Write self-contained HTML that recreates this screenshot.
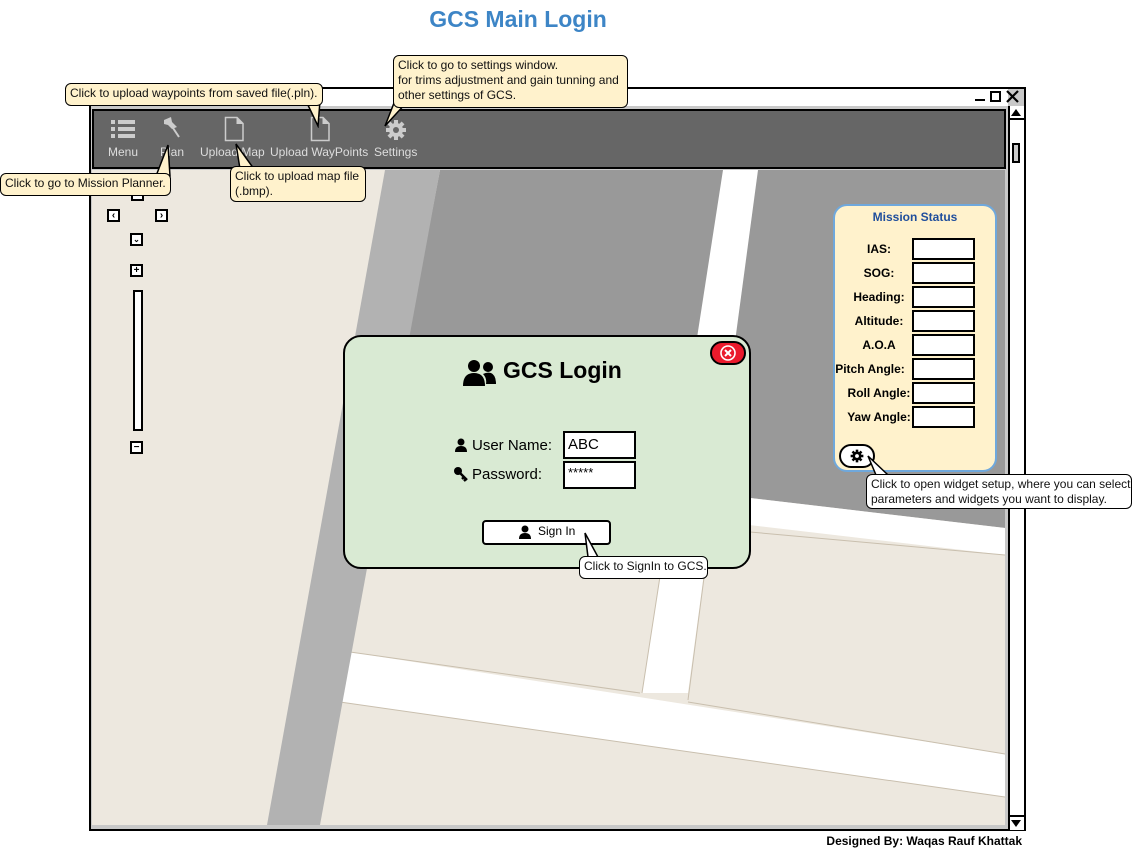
<!DOCTYPE html>
<html><head><meta charset="utf-8"><style>
*{box-sizing:border-box;margin:0;padding:0}
body{width:1133px;height:853px;background:#fff;position:relative;overflow:hidden;font-family:"Liberation Sans",sans-serif;}
.abs{position:absolute}
.tip{position:absolute;background:#fff2cc;border:1.5px solid #000;border-radius:6px;font-size:12px;line-height:15px;padding:2px 4px;color:#111;white-space:nowrap}
.tip.w{background:#fff}
.lbl{position:absolute;font-size:12px;font-weight:bold;text-align:center;width:90px;left:834px}
.box{position:absolute;width:63px;height:22px;border:2px solid #000;background:#fff}
.nav{position:absolute;width:13px;height:13px;border:2px solid #000;background:#fff;font-size:10px;line-height:9px;text-align:center;font-weight:bold}
.tb{position:absolute;top:145px;font-size:12px;color:#ddd}
</style></head><body>
<div class="abs" style="left:0;top:6px;width:1036px;text-align:center;font-size:23px;font-weight:bold;color:#3d85c6">GCS Main Login</div>

<!-- window -->
<div class="abs" style="left:89px;top:87px;width:937px;height:744px;border:2px solid #000;background:#c8c8c8"></div>
<div class="abs" style="left:91px;top:89px;width:917px;height:17px;background:#fff"></div>
<div class="abs" style="left:975px;top:99px;width:10px;height:2px;background:#000"></div>
<div class="abs" style="left:990px;top:91px;width:11px;height:11px;border:2px solid #000"></div>
<svg class="abs" style="left:1006px;top:90px" width="13" height="13"><path d="M1 1 L12 12 M12 1 L1 12" stroke="#000" stroke-width="2.2"/></svg>
<!-- scrollbar -->
<div class="abs" style="left:1008px;top:106px;width:16px;height:724px;background:#fff;border-left:2px solid #000"></div>
<div class="abs" style="left:1008px;top:106px;width:16px;height:14px;border:2px solid #000;border-right:none;border-top:none;background:#fff"></div>
<div class="abs" style="left:1011px;top:109px;width:0;height:0;border-left:5px solid transparent;border-right:5px solid transparent;border-bottom:7px solid #000"></div>
<div class="abs" style="left:1012px;top:143px;width:8px;height:20px;border:2px solid #000;background:#ccc"></div>
<div class="abs" style="left:1008px;top:815px;width:16px;height:15px;border-top:2px solid #000;border-left:2px solid #000"></div>
<div class="abs" style="left:1011px;top:820px;width:0;height:0;border-left:5px solid transparent;border-right:5px solid transparent;border-top:7px solid #000"></div>

<!-- toolbar -->
<div class="abs" style="left:92px;top:109px;width:914px;height:60px;background:#666;border:2px solid #000"></div>
<svg class="abs" style="left:108px;top:118px" width="30" height="22"><g fill="#ccc"><rect x="3" y="2" width="4" height="4"/><rect x="10" y="2" width="17" height="4"/><rect x="3" y="9" width="4" height="4"/><rect x="10" y="9" width="17" height="4"/><rect x="3" y="16" width="4" height="4"/><rect x="10" y="16" width="17" height="4"/></g></svg>
<svg class="abs" style="left:160px;top:116px" width="24" height="26"><path d="M4 4 L11 1 L12 6 L17 11 L12 13 L8 9 L4 8 Z" fill="#ccc"/><path d="M13 12 L19 21" stroke="#ccc" stroke-width="2"/></svg>
<svg class="abs" style="left:224px;top:116px" width="22" height="26"><path d="M1.5 1.5 H13 L19 7.5 V24.5 H1.5 Z" fill="none" stroke="#ccc" stroke-width="1.5"/><path d="M13 1.5 V7.5 H19" fill="#ccc" stroke="#ccc"/></svg>
<svg class="abs" style="left:310px;top:116px" width="22" height="26"><path d="M1.5 1.5 H13 L19 7.5 V24.5 H1.5 Z" fill="none" stroke="#ccc" stroke-width="1.5"/><path d="M13 1.5 V7.5 H19" fill="#ccc" stroke="#ccc"/></svg>
<svg class="abs" style="left:385px;top:119px" width="22" height="22" viewBox="0 0 22 22"><g fill="#ccc"><circle cx="11" cy="11" r="7"/><rect x="9" y="1" width="4" height="20"/><rect x="1" y="9" width="20" height="4"/><rect x="9" y="1" width="4" height="20" transform="rotate(45 11 11)"/><rect x="9" y="1" width="4" height="20" transform="rotate(-45 11 11)"/></g><circle cx="11" cy="11" r="3" fill="#666"/></svg>
<div class="tb" style="left:108px">Menu</div>
<div class="tb" style="left:160px">Plan</div>
<div class="tb" style="left:200px">Upload Map</div>
<div class="tb" style="left:270px">Upload WayPoints</div>
<div class="tb" style="left:374px">Settings</div>

<!-- map -->
<svg class="abs" style="left:92px;top:170px" width="913" height="655" viewBox="92 170 913 655">
<rect x="92" y="170" width="913" height="655" fill="#ede8df"/>
<polygon points="440,170 1005,170 1005,528 386,455" fill="#999"/>
<polygon points="386,455 1005,528 1005,555 383,482" fill="#fff"/>
<polygon points="723,170 758,170 688,693 642,693" fill="#fff"/>
<polygon points="350,652 1005,754 1005,797 340,702" fill="#fff"/>
<path d="M350 652 L640 693 M688 702 L1005 754 M340 702 L1005 797 M642 693 L661 570 M688 700 L705 570 M750 532 L1005 555" stroke="#c9bfae" stroke-width="1" fill="none"/>
<polygon points="385,170 440,170 320,825 267,825" fill="#b2b2b2"/>
</svg>

<!-- nav -->
<div class="nav" style="left:131px;top:186px;height:15px;border-top:none"></div>
<div class="nav" style="left:107px;top:209px">‹</div>
<div class="nav" style="left:155px;top:209px">›</div>
<div class="nav" style="left:130px;top:233px;font-size:8px">⌄</div>
<div class="nav" style="left:130px;top:264px">+</div>
<div class="abs" style="left:133px;top:290px;width:10px;height:141px;border:2px solid #000;background:#fff"></div>
<div class="nav" style="left:130px;top:441px">−</div>

<!-- mission status -->
<div class="abs" style="left:833px;top:204px;width:164px;height:268px;background:#fff2cc;border:2px solid #6fa8dc;border-radius:14px"></div>
<div class="abs" style="left:833px;top:210px;width:164px;text-align:center;font-size:12px;font-weight:bold;color:#1f4e9c">Mission Status</div>
<div class="lbl" style="top:242px">IAS:</div>
<div class="lbl" style="top:266px">SOG:</div>
<div class="lbl" style="top:290px">Heading:</div>
<div class="lbl" style="top:314px">Altitude:</div>
<div class="lbl" style="top:338px">A.O.A</div>
<div class="lbl" style="top:362px;left:825px;width:90px">Pitch Angle:</div>
<div class="lbl" style="top:386px">Roll Angle:</div>
<div class="lbl" style="top:410px">Yaw Angle:</div>
<div class="box" style="left:912px;top:238px"></div>
<div class="box" style="left:912px;top:262px"></div>
<div class="box" style="left:912px;top:286px"></div>
<div class="box" style="left:912px;top:310px"></div>
<div class="box" style="left:912px;top:334px"></div>
<div class="box" style="left:912px;top:358px"></div>
<div class="box" style="left:912px;top:382px"></div>
<div class="box" style="left:912px;top:406px"></div>
<div class="abs" style="left:839px;top:444px;width:36px;height:24px;border:2px solid #000;border-radius:12px;background:#fff"></div>
<svg class="abs" style="left:850px;top:449px" width="14" height="14" viewBox="0 0 22 22"><g fill="#000"><circle cx="11" cy="11" r="7"/><rect x="9" y="1" width="4" height="20"/><rect x="1" y="9" width="20" height="4"/><rect x="9" y="1" width="4" height="20" transform="rotate(45 11 11)"/><rect x="9" y="1" width="4" height="20" transform="rotate(-45 11 11)"/></g><circle cx="11" cy="11" r="3" fill="#fff"/></svg>
<svg class="abs" style="left:866px;top:455px" width="30" height="22"><polygon points="2,1 22,20 10,20" fill="#fff" stroke="#000" stroke-width="1.5"/></svg>
<div class="tip w" style="left:866px;top:474px;width:266px;height:35px">Click to open widget setup, where you can select<br>parameters and widgets you want to display.</div>

<!-- login dialog -->
<div class="abs" style="left:343px;top:335px;width:408px;height:234px;background:#d9ead3;border:2px solid #000;border-radius:18px"></div>
<div class="abs" style="left:710px;top:341px;width:36px;height:24px;background:#ea1a2c;border:2px solid #000;border-radius:12px"></div>
<svg class="abs" style="left:718px;top:343px" width="20" height="20"><circle cx="10" cy="10" r="7" fill="none" stroke="#fff" stroke-width="1.6"/><path d="M7 7 L13 13 M13 7 L7 13" stroke="#fff" stroke-width="2"/></svg>
<svg class="abs" style="left:463px;top:358px" width="34" height="30"><g fill="#000"><circle cx="11" cy="8" r="6"/><path d="M0 28 Q0 15 11 15 Q22 15 22 28 Z"/><circle cx="25" cy="9" r="5"/><path d="M20 16 Q24 14 28 15 Q33 17 33 26 L23 26 Q24 20 20 16 Z"/></g></svg>
<div class="abs" style="left:503px;top:357px;font-size:23px;font-weight:bold">GCS Login</div>
<svg class="abs" style="left:455px;top:438px" width="12" height="14"><circle cx="6" cy="4" r="3.5"/><path d="M0 14 Q0 8 6 8 Q12 8 12 14 Z"/></svg>
<div class="abs" style="left:472px;top:437px;font-size:15px">User Name:</div>
<svg class="abs" style="left:453px;top:466px" width="16" height="16"><circle cx="5" cy="5" r="4"/><path d="M7 7 L14 14 M11 11 L9 13 M13 13 L11 15" stroke="#000" stroke-width="2.4"/></svg>
<div class="abs" style="left:472px;top:466px;font-size:15px">Password:</div>
<div class="abs" style="left:563px;top:431px;width:73px;height:28px;border:2px solid #000;background:#fff;font-size:15px;padding:3px 3px">ABC</div>
<div class="abs" style="left:563px;top:461px;width:73px;height:28px;border:2px solid #000;background:#fff;font-size:13px;padding:2px 3px">*****</div>
<div class="abs" style="left:482px;top:520px;width:129px;height:25px;border:2px solid #000;background:#fff;border-radius:4px"></div>
<svg class="abs" style="left:519px;top:525px" width="12" height="14"><circle cx="6" cy="4" r="3.5"/><path d="M0 14 Q0 8 6 8 Q12 8 12 14 Z"/></svg>
<div class="abs" style="left:538px;top:524px;font-size:12px">Sign In</div>
<svg class="abs" style="left:580px;top:531px" width="30" height="30"><polygon points="5,2 18,26 8,26" fill="#fff" stroke="#000" stroke-width="1.5"/></svg>
<div class="tip w" style="left:579px;top:556px;width:129px;height:23px">Click to SignIn to GCS.</div>

<!-- yellow tooltips -->
<svg class="abs" style="left:300px;top:100px" width="30" height="28"><polygon points="6,1 20,1 18,26" fill="#fff2cc" stroke="#000" stroke-width="1.5"/></svg>
<div class="tip" style="left:65px;top:83px;width:258px;height:23px">Click to upload waypoints from saved file(.pln).</div>
<svg class="abs" style="left:380px;top:102px" width="30" height="28"><polygon points="14,1 26,1 5,24" fill="#fff2cc" stroke="#000" stroke-width="1.5"/></svg>
<div class="tip" style="left:393px;top:55px;width:235px;height:53px">Click to go to settings window.<br>for trims adjustment and gain tunning and<br>other settings of GCS.</div>
<svg class="abs" style="left:150px;top:140px" width="30" height="40"><polygon points="18,5 20,36 6,36" fill="#fff2cc" stroke="#000" stroke-width="1.5"/></svg>
<div class="tip" style="left:0;top:173px;width:171px;height:23px">Click to go to Mission Planner.</div>
<svg class="abs" style="left:230px;top:140px" width="30" height="32"><polygon points="6,4 24,29 10,29" fill="#fff2cc" stroke="#000" stroke-width="1.5"/></svg>
<div class="tip" style="left:230px;top:166px;width:136px;height:36px">Click to upload map file<br>(.bmp).</div>

<div class="abs" style="left:800px;top:834px;width:222px;text-align:right;font-size:12px;font-weight:bold">Designed By: Waqas Rauf Khattak</div>
</body></html>
